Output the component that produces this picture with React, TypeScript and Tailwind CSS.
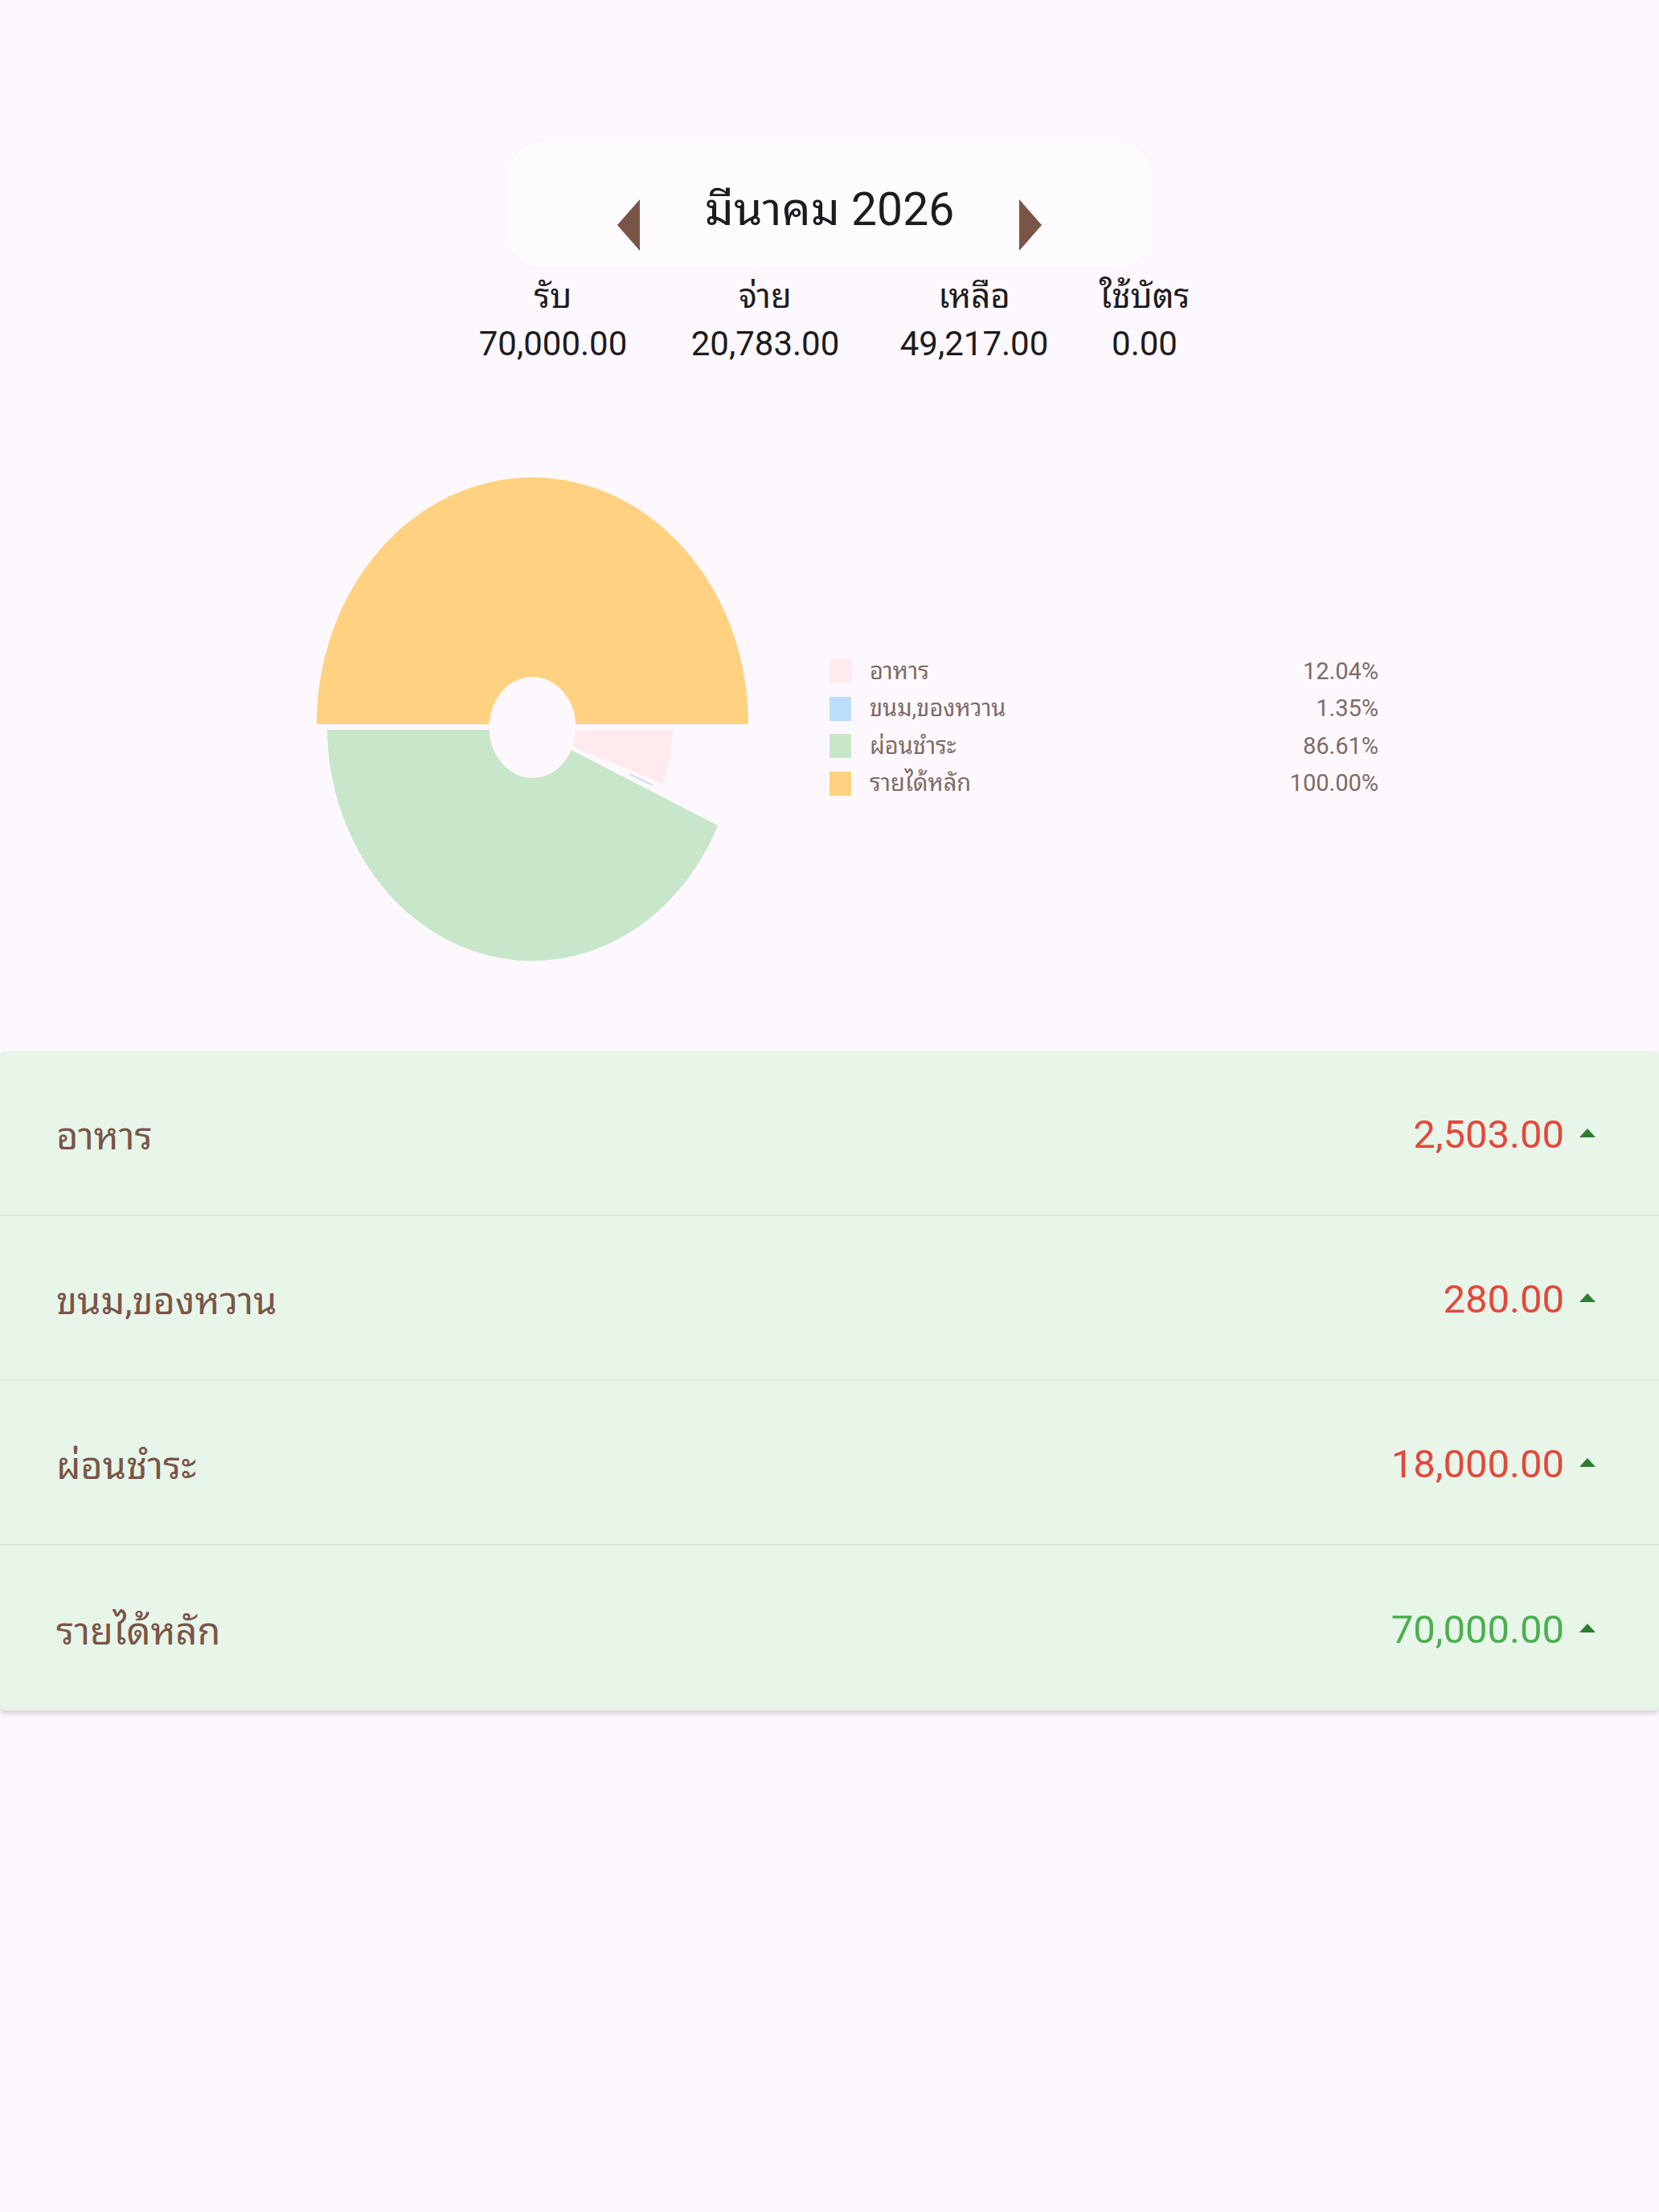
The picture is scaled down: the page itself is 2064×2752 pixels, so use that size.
import React from "react";

type Row = { name: string; amount: string; income?: boolean };

const rows: Row[] = [
  { name: "อาหาร", amount: "2,503.00" },
  { name: "ขนม,ของหวาน", amount: "280.00" },
  { name: "ผ่อนชำระ", amount: "18,000.00" },
  { name: "รายได้หลัก", amount: "70,000.00", income: true },
];

const legend = [
  { name: "อาหาร", pct: "12.04%", color: "bg-[#ffebee]" },
  { name: "ขนม,ของหวาน", pct: "1.35%", color: "bg-[#bbdefb]" },
  { name: "ผ่อนชำระ", pct: "86.61%", color: "bg-[#c8e6c9]" },
  { name: "รายได้หลัก", pct: "100.00%", color: "bg-[#ffd180]" },
];

const summary = [
  { label: "รับ", value: "70,000.00", w: "w-[264px]" },
  { label: "จ่าย", value: "20,783.00", w: "w-[264px]" },
  { label: "เหลือ", value: "49,217.00", w: "w-[256px]" },
  { label: "ใช้บัตร", value: "0.00", w: "w-[168px]" },
];

function Arrow({ dir }: { dir: "left" | "right" }) {
  return (
    <svg width="28" height="64" viewBox="0 0 28 64" className="shrink-0">
      {dir === "left" ? (
        <polygon points="28,0 28,64 0,32" fill="#795548" />
      ) : (
        <polygon points="0,0 0,64 28,32" fill="#795548" />
      )}
    </svg>
  );
}

function Pie() {
  return (
    <svg width="570" height="640" viewBox="380 580 570 640" className="shrink-0">
      {/* รายได้หลัก */}
      <path d="M394,901 A268.5,307 0 0 1 931,901 Z" fill="#ffd180" />
      {/* ผ่อนชำระ */}
      <path d="M662,908 L893,1027 A255,292 0 0 1 407,908 Z" fill="#c8e6c9" />
      {/* อาหาร */}
      <path d="M662,908 L837,908 A175,195 0 0 1 825,975 Z" fill="#ffebee" />
      {/* ขนม,ของหวาน */}
      <line x1="783" y1="963" x2="812" y2="977" stroke="#c9d6ee" strokeWidth="1.5" />
      {/* centre hole */}
      <ellipse cx="662.5" cy="905" rx="54" ry="63" fill="#fdf8fd" />
    </svg>
  );
}

export default function App() {
  const font =
    "font-['Roboto','Noto_Sans_Thai_Looped','Noto_Serif_Thai','Loma','Garuda','Waree','Norasi','Tlwg_Typo','Noto_Sans_Thai','Noto_Sans',sans-serif]";
  return (
    <div className={`min-h-[2752px] w-full bg-[#fdf8fd] ${font}`}>
      {/* month header */}
      <div className="pt-[177px] flex justify-center">
        <div className="w-[803px] h-[156px] rounded-[44px] bg-[#fefbfe] shadow-[0_0_6px_rgba(120,90,120,0.025)] flex justify-center items-start">
          <div className="mt-[71px]">
            <Arrow dir="left" />
          </div>
          <div className="mt-[50px] mx-[81px] text-[57px] leading-[68px] text-[#1d1b20] whitespace-nowrap">
            มีนาคม 2026
          </div>
          <div className="mt-[71px]">
            <Arrow dir="right" />
          </div>
        </div>
      </div>

      {/* totals */}
      <div className="mt-[11px] flex justify-center">
        {summary.map((s) => (
          <div key={s.label} className={`${s.w} flex flex-col items-center text-[42px] text-[#1d1b20]`}>
            <div className="h-[50px] leading-[50px] whitespace-nowrap">{s.label}</div>
            <div className="mt-[9px] h-[50px] leading-[50px] whitespace-nowrap">{s.value}</div>
          </div>
        ))}
      </div>

      {/* chart + legend */}
      <div className="mt-[127px] h-[640px] pl-[380px] flex items-start">
        <Pie />
        <div className="ml-[82px] mt-[232px] w-[683px] flex flex-col">
          {legend.map((l) => (
            <div key={l.name} className="h-[46.5px] flex items-center text-[29px] text-[#7d6b66]">
              <div className={`w-[27px] h-[30px] ${l.color}`} />
              <div className="ml-[23px] whitespace-nowrap">{l.name}</div>
              <div className="ml-auto whitespace-nowrap">{l.pct}</div>
            </div>
          ))}
        </div>
      </div>

      {/* category list */}
      <div className="mt-[88px] rounded-[6px] bg-[#e8f5e9] shadow-[0_4px_6px_rgba(0,0,0,0.16)]">
        {rows.map((r, i) => (
          <div
            key={r.name}
            className={`h-[205px] pl-[70px] pr-[79px] flex items-center ${
              i < rows.length - 1 ? "border-b-2 border-[#dde8de]" : ""
            }`}
          >
            <div className="text-[47px] leading-[58px] text-[#795548] whitespace-nowrap pt-[8px]">{r.name}</div>
            <div
              className={`ml-auto text-[49px] leading-[58px] pt-[4px] whitespace-nowrap ${
                r.income ? "text-[#4caf50]" : "text-[#e5473b]"
              }`}
            >
              {r.amount}
            </div>
            <svg width="20" height="12" viewBox="0 0 20 12" className="ml-[19px] mb-[2px]">
              <polygon points="0,12 20,12 10,1" fill="#2e7d32" />
            </svg>
          </div>
        ))}
      </div>
    </div>
  );
}
